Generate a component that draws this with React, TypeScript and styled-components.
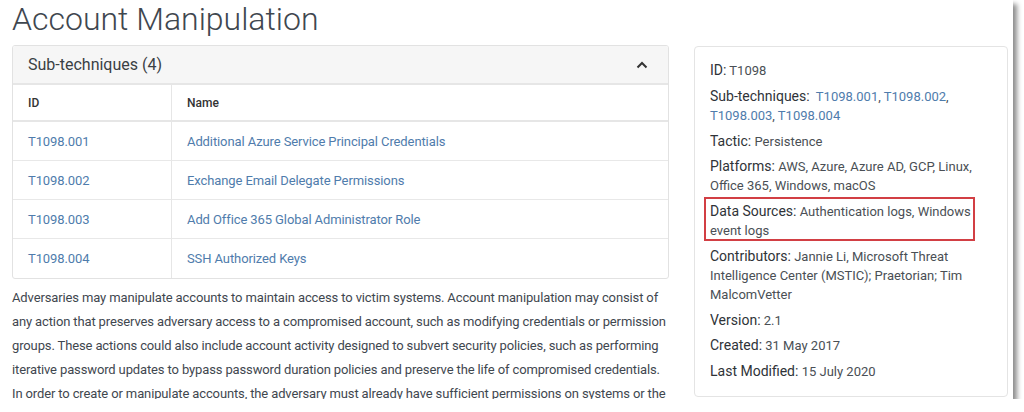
import React from "react";
import styled, { createGlobalStyle } from "styled-components";

const Global = createGlobalStyle`
  html, body { margin: 0; padding: 0; background: #ffffff; }
  body { font-family: Roboto, "Liberation Sans", Arial, sans-serif; }
  * { box-sizing: border-box; }
`;

const Frame = styled.div`
  width: 1013px;
  height: 399px;
  overflow: hidden;
  background: #ffffff;
  box-shadow: 4px 4px 5px rgba(0, 0, 0, 0.45);
  padding-left: 12px;
`;

const Title = styled.h1`
  margin: 0 0 7px 0;
  font-family: Roboto, "Liberation Sans", sans-serif;
  font-weight: 300;
  font-size: 32px;
  line-height: 38px;
  color: #3f474f;
`;

const Columns = styled.div`
  display: flex;
  gap: 25px;
  align-items: flex-start;
`;

const LeftCol = styled.div`
  width: 657px;
  flex: none;
`;

const SubCard = styled.div`
  border: 1px solid #e2e2e2;
  border-radius: 3px;
  overflow: hidden;
  background: #fff;
`;

const SubHeader = styled.div`
  height: 39px;
  display: flex;
  align-items: center;
  justify-content: space-between;
  padding: 0 20px 0 15px;
  background: #f6f6f6;
  border-bottom: 2px solid #e6e6e6;
  font-size: 16px;
  color: #3a3f44;
`;

const Table = styled.div`
  display: grid;
  grid-template-columns: 159px 1fr;
`;

const Cell = styled.div<{ $head?: boolean; $first?: boolean; $last?: boolean }>`
  height: ${(p) => (p.$head ? "37px" : "39px")};
  display: flex;
  align-items: center;
  padding-left: 15px;
  border-bottom: ${(p) => (p.$last ? "none" : p.$head ? "2px solid #e6e6e6" : "1px solid #e8e8e8")};
  border-right: ${(p) => (p.$first ? "1px solid #e6e6e6" : "none")};
  font-size: ${(p) => (p.$head ? "12px" : "13px")};
  font-weight: ${(p) => (p.$head ? 500 : 400)};
  letter-spacing: ${(p) => (p.$head ? "0" : "-0.1px")};
  color: ${(p) => (p.$head ? "#333" : "#4f7cac")};
`;

const Paragraph = styled.p`
  margin: 7px 0 0 0;
  font-size: 13px;
  letter-spacing: -0.13px;
  line-height: 24px;
  color: #3f474f;
`;

const InfoCard = styled.div`
  width: 314px;
  flex: none;
  margin-top: 1px;
  border: 1px solid #e4e4e4;
  border-radius: 4px;
  padding: 14px 15px 15px 15px;
  display: flex;
  flex-direction: column;
  gap: 6.75px;
`;

const Item = styled.div`
  position: relative;
  font-size: 13px;
  line-height: 19px;
  color: #4a4f55;
`;

const Label = styled.span`
  font-size: 14px;
  color: #2f3338;
`;

const Link = styled.span`
  color: #4f7cac;
`;

const Marker = styled.div`
  position: absolute;
  left: -6px;
  top: -5px;
  width: 271px;
  height: 44px;
  border: 2px solid #d23f44;
  pointer-events: none;
`;

const rows = [
  ["T1098.001", "Additional Azure Service Principal Credentials"],
  ["T1098.002", "Exchange Email Delegate Permissions"],
  ["T1098.003", "Add Office 365 Global Administrator Role"],
  ["T1098.004", "SSH Authorized Keys"],
];

export default function App() {
  return (
    <>
      <Global />
      <Frame>
        <Title>Account Manipulation</Title>
        <Columns>
          <LeftCol>
            <SubCard>
              <SubHeader>
                <span>Sub-techniques (4)</span>
                <svg width="12" height="8" viewBox="0 0 12 8">
                  <polyline points="1.5,6.5 6,2 10.5,6.5" fill="none" stroke="#333" strokeWidth="2" />
                </svg>
              </SubHeader>
              <Table>
                <Cell $head $first>ID</Cell>
                <Cell $head>Name</Cell>
                {rows.map(([id, name], i) => (
                  <React.Fragment key={id}>
                    <Cell $first $last={i === rows.length - 1}>{id}</Cell>
                    <Cell $last={i === rows.length - 1}>{name}</Cell>
                  </React.Fragment>
                ))}
              </Table>
            </SubCard>
            <Paragraph>
              Adversaries may manipulate accounts to maintain access to victim systems. Account manipulation may consist of
              any action that preserves adversary access to a compromised account, such as modifying credentials or permission
              groups. These actions could also include account activity designed to subvert security policies, such as performing
              iterative password updates to bypass password duration policies and preserve the life of compromised credentials.
              In order to create or manipulate accounts, the adversary must already have sufficient permissions on systems or the
              domain.
            </Paragraph>
          </LeftCol>
          <InfoCard>
            <Item><Label>ID:</Label> T1098</Item>
            <Item>
              <Label>Sub-techniques:</Label>&nbsp; <Link>T1098.001</Link>, <Link>T1098.002</Link>, <Link>T1098.003</Link>, <Link>T1098.004</Link>
            </Item>
            <Item><Label>Tactic:</Label> Persistence</Item>
            <Item><Label>Platforms:</Label> AWS, Azure, Azure AD, GCP, Linux, Office 365, Windows, macOS</Item>
            <Item>
              <Label>Data Sources:</Label> Authentication logs, Windows event logs
              <Marker />
            </Item>
            <Item><Label>Contributors:</Label> Jannie Li, Microsoft Threat Intelligence Center (MSTIC); Praetorian; Tim MalcomVetter</Item>
            <Item><Label>Version:</Label> 2.1</Item>
            <Item><Label>Created:</Label> 31 May 2017</Item>
            <Item><Label>Last Modified:</Label> 15 July 2020</Item>
          </InfoCard>
        </Columns>
      </Frame>
    </>
  );
}
